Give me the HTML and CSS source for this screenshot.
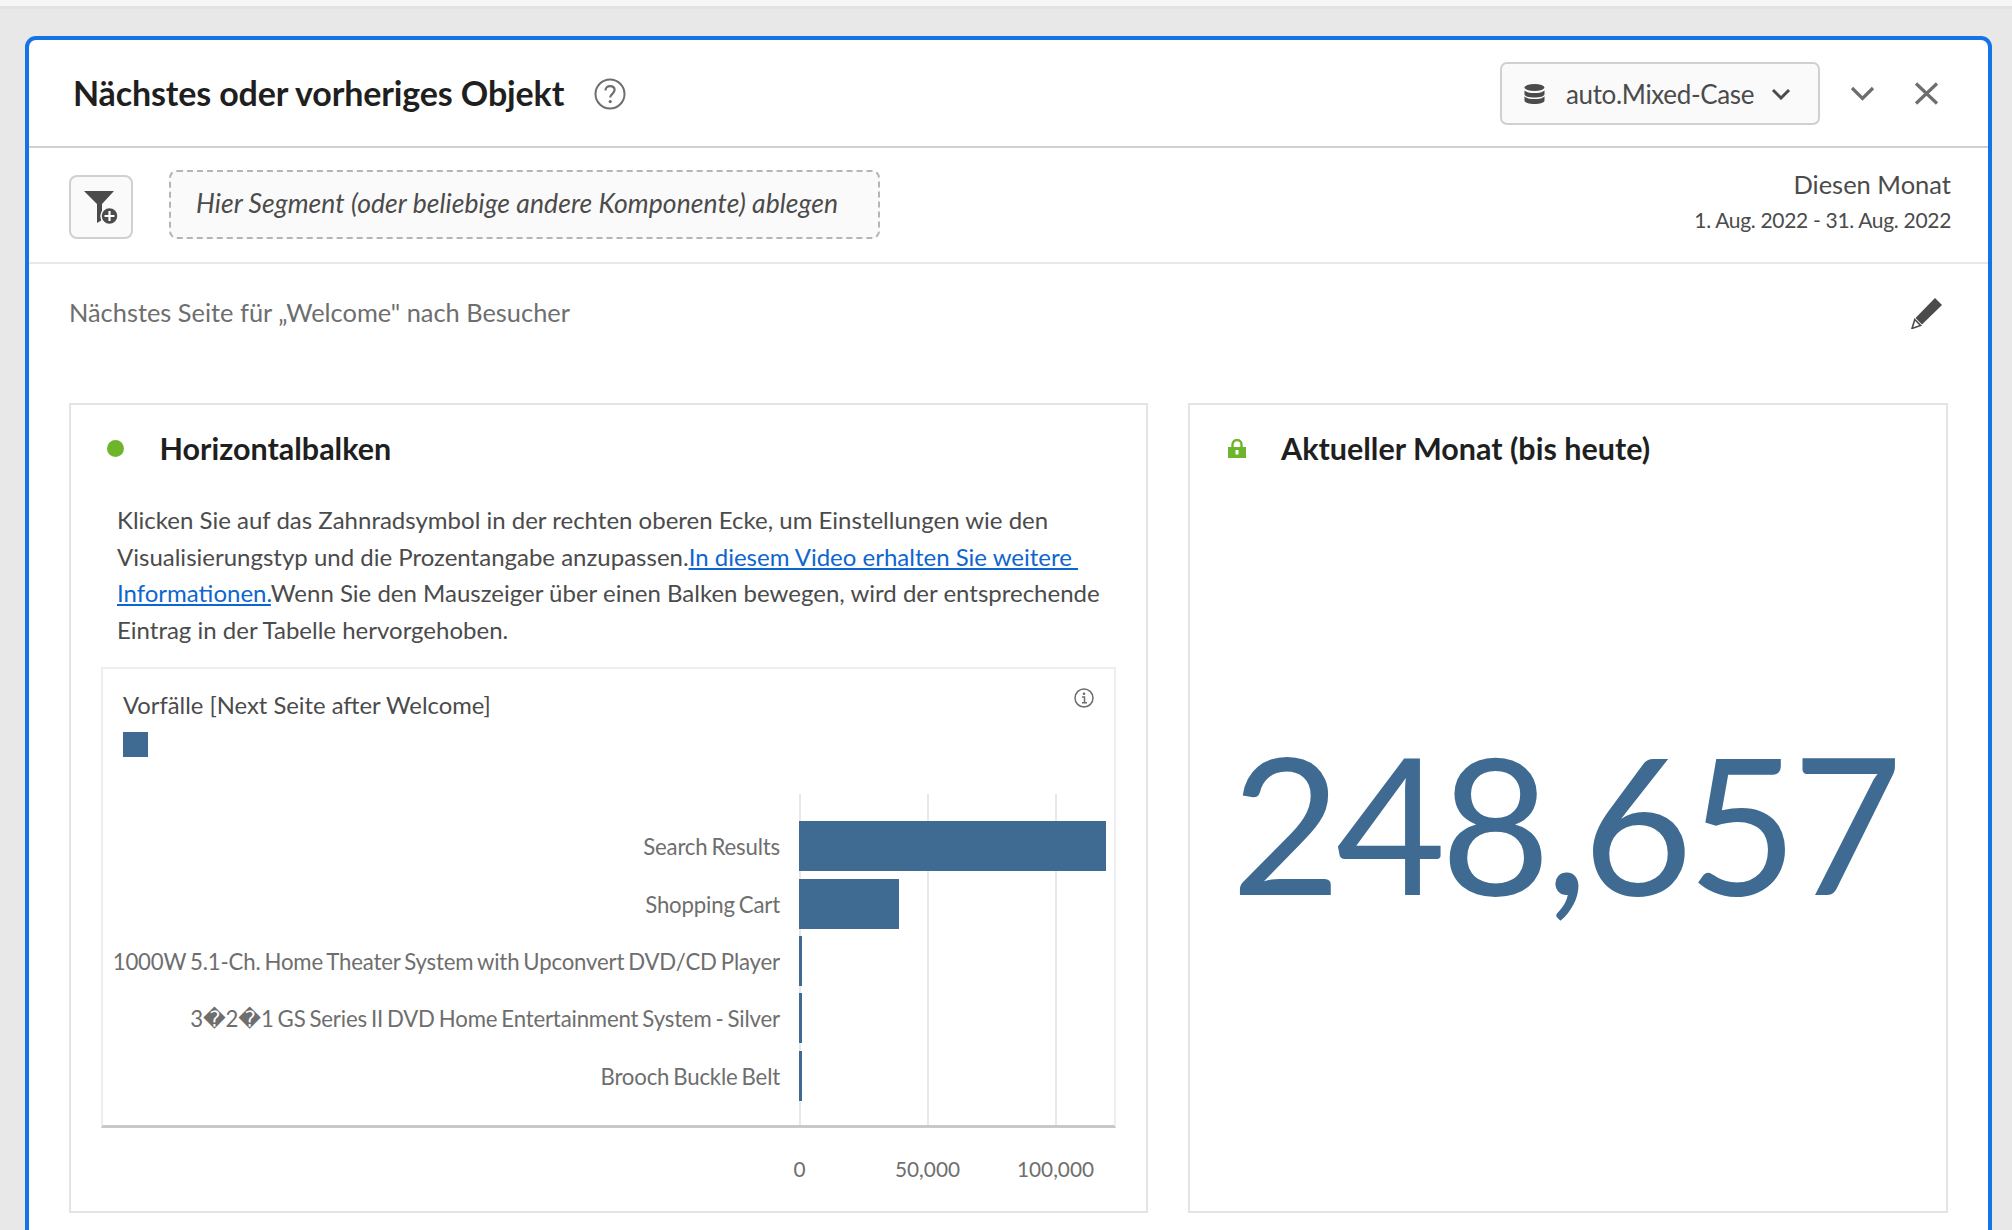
FILE: index.html
```html
<!DOCTYPE html>
<html lang="de">
<head>
<meta charset="utf-8">
<title>Nächstes oder vorheriges Objekt</title>
<link rel="stylesheet" href="styles.css">
</head>
<body>
<div class="topstrip"></div>
<section class="panel">
  <header class="panel-head">
    <h1 class="panel-title">Nächstes oder vorheriges Objekt</h1>
    <svg class="help" viewBox="0 0 32 32"><circle cx="16" cy="16" r="14.5" fill="none" stroke="#6e6e6e" stroke-width="2"/><path d="M11.5 12.5c0-2.7 2-4.4 4.6-4.4s4.5 1.6 4.5 4c0 3.6-4.4 3.8-4.4 7.4" fill="none" stroke="#6e6e6e" stroke-width="2.2"/><circle cx="16.2" cy="23.6" r="1.6" fill="#6e6e6e"/></svg>
    <div class="head-actions">
      <button class="suite">
        <svg class="db" viewBox="0 0 21 20"><ellipse cx="10.5" cy="3.5" rx="10" ry="3.5" fill="#4b4b4b"/><path d="M.5 6.2c1.5 2 5.5 2.8 10 2.8s8.500-.8 10-2.800v4c0 2-4.500 3.300-10 3.300s-10-1.300-10-3.300z" fill="#4b4b4b"/><path d="M.5 12.200c1.500 2 5.500 2.800 10 2.800s8.500-.8 10-2.800v4.300c0 2-4.500 3.500-10 3.500s-10-1.500-10-3.500z" fill="#4b4b4b"/></svg>
        <span class="suite-name">auto.Mixed-Case</span>
        <svg class="chev-small" viewBox="0 0 20 12"><path d="M2 2l8 8 8-8" fill="none" stroke="#4b4b4b" stroke-width="3"/></svg>
      </button>
      <svg class="chev" viewBox="0 0 25 15"><path d="M2 2l10.500 10.500L23 2" fill="none" stroke="#6e6e6e" stroke-width="3.200"/></svg>
      <svg class="close" viewBox="0 0 25 23"><path d="M2 1.500l21 20M23 1.500l-21 20" fill="none" stroke="#6e6e6e" stroke-width="3.200"/></svg>
    </div>
  </header>

  <div class="toolbar">
    <button class="add-filter">
      <svg viewBox="0 0 36 36" class="filter-icon"><path d="M1 2h30L19 15v16l-5 3V15z" fill="#4b4b4b"/><circle cx="26.500" cy="27" r="8.500" fill="#4b4b4b" stroke="#fafafa" stroke-width="1.500"/><path d="M26.500 22v10M21.500 27h10" stroke="#fff" stroke-width="2.200"/></svg>
    </button>
    <div class="dropzone">Hier Segment (oder beliebige andere Komponente) ablegen</div>
    <div class="daterange">
      <div class="range-name">Diesen Monat</div>
      <div class="range-dates">1. Aug. 2022 - 31. Aug. 2022</div>
    </div>
  </div>

  <div class="content">
    <div class="subtitle-row">
      <span class="subtitle">Nächstes Seite für „Welcome" nach Besucher</span>
      <svg class="pencil" viewBox="0 0 32 32"><path d="M24 1l7 7L11 27.500 4.500 21z" fill="#4b4b4b"/><path d="M3.800 22.500l5.800 5.900L1 31.500z" fill="#fff" stroke="#4b4b4b" stroke-width="1.600"/></svg>
    </div>

    <div class="cards">
      <article class="card card-chart">
        <div class="card-head">
          <span class="dot"></span>
          <h2 class="card-title">Horizontalbalken</h2>
        </div>
        <p class="note">Klicken Sie auf das Zahnradsymbol in der rechten oberen Ecke, um Einstellungen wie den<br>Visualisierungstyp und die Prozentangabe anzupassen.<a href="#">In diesem Video erhalten Sie weitere&nbsp;<br>Informationen.</a>Wenn Sie den Mauszeiger über einen Balken bewegen, wird der entsprechende<br>Eintrag in der Tabelle hervorgehoben.</p>
        <div class="chart">
          <div class="chart-top">
            <div class="chart-title">Vorfälle [Next Seite after Welcome]</div>
            <svg class="info" viewBox="0 0 20 20"><circle cx="10" cy="10" r="9" fill="none" stroke="#6e6e6e" stroke-width="1.500"/><circle cx="10" cy="5.800" r="1.300" fill="#6e6e6e"/><path d="M8 9h2.500v5.500M8 14.800h5" fill="none" stroke="#6e6e6e" stroke-width="1.500"/></svg>
          </div>
          <div class="legend"></div>
          <div class="plot">
            <div class="labels">
              <div class="label">Search Results</div>
              <div class="label">Shopping Cart</div>
              <div class="label">1000W 5.1-Ch. Home Theater System with Upconvert DVD/CD Player</div>
              <div class="label">3�2�1 GS Series II DVD Home Entertainment System - Silver</div>
              <div class="label">Brooch Buckle Belt</div>
            </div>
            <div class="bars">
              <div class="bar" style="width:307px"></div>
              <div class="bar" style="width:100px"></div>
              <div class="bar" style="width:3px"></div>
              <div class="bar" style="width:3px"></div>
              <div class="bar" style="width:3px"></div>
            </div>
          </div>
        </div>
        <div class="axis"><span>0</span><span>50,000</span><span>100,000</span></div>
      </article>

      <article class="card card-number">
        <div class="card-head">
          <svg class="lock" viewBox="0 0 18 19"><path d="M4.500 8V5.500a4.500 4.500 0 0 1 9 0V8" fill="none" stroke="#6fb52c" stroke-width="2.400"/><path d="M0 8h18v11H0z" fill="#6fb52c"/><rect x="7.500" y="11" width="3" height="4.500" fill="#fff"/></svg>
          <h2 class="card-title">Aktueller Monat (bis heute)</h2>
        </div>
        <div class="big-number">248,657</div>
      </article>
    </div>
  </div>
</section>
</body>
</html>
```

FILE: styles.css
```css
* { box-sizing: border-box; }
html, body { margin: 0; height: 1230px; overflow: hidden; }
body {
  background: #e8e8e8;
  font-family: "Lato", "Liberation Sans", "DejaVu Sans", sans-serif;
  color: #4b4b4b;
}
.topstrip { height: 9px; background: #f6f6f6; border-bottom: 3px solid #e2e2e2; }

.panel {
  margin: 27px 20px 0 25px;
  height: 1194px;
  background: #fff;
  border: 4px solid #1473e6;
  border-bottom: 0;
  border-radius: 11px 11px 0 0;
}

.panel-head {
  height: 108px;
  display: flex;
  align-items: center;
  padding: 1px 49px 0 44px;
  border-bottom: 2px solid #d0d0d0;
}
.panel-title { margin: -2px 0 0; font-size: 34px; font-weight: 700; color: #1f1f1f; letter-spacing: -.13px; }
.help { width: 32px; height: 32px; margin-left: 30px; }
.head-actions { margin-left: auto; display: flex; align-items: center; }
.suite {
  width: 320px; height: 63px;
  display: flex; align-items: center;
  padding: 0 0 0 22px;
  background: #fafafa;
  border: 2px solid #d0d0d0;
  border-radius: 7px;
  font-family: inherit;
}
.db { width: 21px; height: 20px; }
.suite-name { margin-left: 21px; font-size: 26px; letter-spacing: -.35px; color: #4b4b4b; }
.chev-small { width: 20px; height: 12px; margin-left: 17px; }
.chev { width: 25px; height: 15px; margin-left: 30px; }
.close { width: 25px; height: 23px; margin-left: 39px; }

.toolbar {
  height: 116px;
  display: flex;
  align-items: center;
  padding: 0 37px 0 40px;
  border-bottom: 2px solid #e8e8e8;
}
.add-filter {
  width: 64px; height: 64px;
  margin-top: 4px;
  display: flex; align-items: center; justify-content: center;
  padding: 0;
  background: #fafafa;
  border: 2px solid #d0d0d0;
  border-radius: 8px;
}
.filter-icon { width: 36px; height: 36px; }
.dropzone {
  width: 711px; height: 69px;
  margin: -1px 0 0 36px;
  display: flex; align-items: center;
  padding: 0 0 3px 25px;
  background: #fafafa;
  border: 2px dashed #b5b5b5;
  border-radius: 8px;
  font-size: 26.500px;
  letter-spacing: .07px;
  font-style: italic;
}
.daterange { margin: -6px 0 0 auto; text-align: right; }
.range-name { font-size: 25.500px; line-height: 36px; }
.range-dates { font-size: 21px; letter-spacing: -.32px; line-height: 36px; }

.content { padding: 34px 40px 0; }
.subtitle-row { height: 30px; display: flex; align-items: center; justify-content: space-between; margin-bottom: 75px; }
.subtitle { margin-top: -2px; font-size: 25.400px; color: #6e6e6e; }
.pencil { width: 32px; height: 32px; margin-right: 5px; }

.cards { display: flex; gap: 40px; }
.card { height: 810px; border: 2px solid #e4e4e4; background: #fff; }
.card-chart { width: 1079px; }
.card-number { flex: 1; display: flex; flex-direction: column; }
.card-head { display: flex; align-items: center; height: 34px; margin-top: 26px; padding-left: 36px; }
.card-title { margin: 0; font-size: 30.500px; font-weight: 700; color: #1f1f1f; }
.dot { width: 17px; height: 17px; border-radius: 50%; background: #6fb52c; margin-right: 35.500px; }
.lock { width: 18px; height: 19px; margin: 0 35px 0 2px; }

.note { margin: 37px 0 19px 46px; font-size: 24px; line-height: 36.600px; white-space: nowrap; }
.note a { color: #0d66d0; text-decoration: underline; }

.chart {
  margin: 0 30px;
  padding-top: 19px;
  border: 2px solid #eeeeee;
  border-bottom: 3px solid #c8c8c8;
}
.chart-top { display: flex; justify-content: space-between; padding: 0 20px 0 20px; }
.chart-title { margin: 2px 0 1px; font-size: 23.800px; line-height: 30px; }
.info { width: 20px; height: 20px; }
.legend { width: 25px; height: 25px; margin: 11px 0 0 20px; background: #3f6a92; }
.plot { display: flex; margin-top: 37px; height: 331px; }
.labels { width: 696px; padding: 27px 19px 0 0; text-align: right; }
.label { height: 57.300px; line-height: 52px; font-size: 22.200px; letter-spacing: -.17px; word-spacing: -1.500px; color: #6e6e6e; white-space: nowrap; }
.bars {
  flex: 1;
  padding-top: 27px;
  background:
    linear-gradient(#e8e8e8, #e8e8e8) 0 0 / 2px 100% no-repeat,
    linear-gradient(#e8e8e8, #e8e8e8) 128px 0 / 2px 100% no-repeat,
    linear-gradient(#e8e8e8, #e8e8e8) 256px 0 / 2px 100% no-repeat;
}
.bar { height: 50px; margin-bottom: 7.300px; background: #3f6a92; }

.axis {
  display: grid;
  grid-template-columns: repeat(3, 128px);
  margin: 27px 0 0 664.500px;
  font-size: 20.800px;
  line-height: 28px;
  color: #6e6e6e;
  text-align: center;
}

.big-number {
  flex: 1;
  display: flex; align-items: center; justify-content: center;
  padding-right: 8px;
  margin-top: -34px;
  font-size: 190px;
  line-height: 1;
  letter-spacing: -5.500px;
  color: #3f6a92;
}
```
